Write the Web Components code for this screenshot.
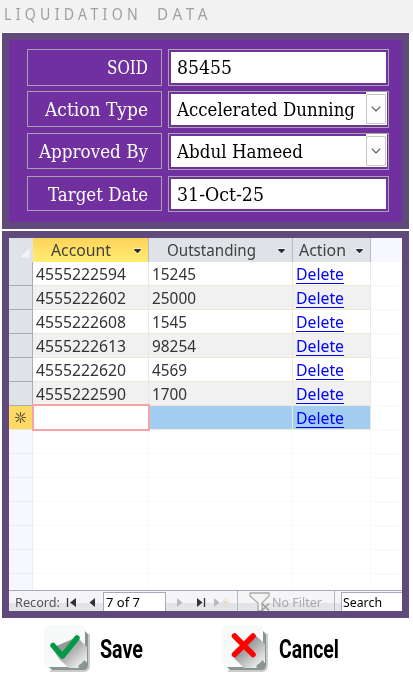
<!DOCTYPE html>
<html lang="en"><head><meta charset="utf-8"><title>Liquidation Data</title>
<style>html,body{margin:0;background:#fff}body{width:413px;height:681px;overflow:hidden}</style></head>
<body><liquidation-form></liquidation-form>
<script>
const define=(name,html,ready)=>customElements.define(name,class extends HTMLElement{
  connectedCallback(){
    if(this.shadowRoot)return;
    const t=document.createElement('template');
    t.innerHTML=typeof html==='function'?html(this):html;
    this.attachShadow({mode:'open'}).append(t.content.cloneNode(true));
    if(ready)ready(this);
  }
});

/* Single line of text whose glyph run is condensed or widened to the "w" attribute. */
define('fit-text',`<style>:host{display:block;flex:none;white-space:nowrap}span{display:inline-block;transform-origin:0 50%}</style><span><slot></slot></span>`,el=>{
  const s=el.shadowRoot.querySelector('span'),w=+el.getAttribute('w');
  const n=s.getBoundingClientRect().width;
  el.style.width=w+'px';
  if(n)s.style.transform=`scaleX(${w/n})`;
});

define('form-label',`<style>:host{display:flex;box-sizing:border-box;width:135px;border:1px solid #a8a0b0;justify-content:flex-end;align-items:center;padding-right:13px;color:#fff;font:17.7px/24px "DejaVu Serif",serif}</style><slot></slot>`);

define('form-field',el=>`<style>:host{display:flex;box-sizing:border-box;width:221px;border:1px solid #a6a6a6;padding:2px;color:#000;font:17.7px/24px "DejaVu Serif",serif}
.in{flex:1;display:flex;align-items:center;background:#fff;padding-left:6px}
.drop{box-sizing:border-box;width:21px;margin:-2px -1px 0 0;background:#fff;padding:2px 1px 1px 0;display:flex}
.drop div{flex:1;border:1px solid #c6c6c6;border-radius:1px;display:flex;align-items:center;justify-content:center;background:#fdfdfd}</style>
<div class="in"><slot></slot></div>${el.hasAttribute('combo')?'<div class="drop"><div><svg width="10" height="6" viewBox="0 0 10 6"><path d="M.7.7 5 5 9.3.7" fill="none" stroke="#555" stroke-width="1.1"/></svg></div></div>':''}`);

define('detail-form',`<style>:host{display:grid;box-sizing:border-box;width:407px;height:196px;margin:1px 0 0 2px;border:7px solid #604a7b;background:#7030a0;padding:9px 0 0 18px;grid-template-columns:135px 221px;column-gap:6px;grid-template-rows:37px 37px 37px 37px;row-gap:5px;align-content:start}
.s{height:36px;padding-top:2px}.last{margin-top:1px}form-label.last{height:35px;padding-top:2px}form-field.last{height:36px}form-field.last fit-text{margin-top:2px}</style>
<form-label><fit-text w="41">SOID</fit-text></form-label><form-field><fit-text w="55">85455</fit-text></form-field>
<form-label class="s"><fit-text w="103">Action Type</fit-text></form-label><form-field combo><fit-text w="178">Accelerated Dunning</fit-text></form-field>
<form-label class="s"><fit-text w="109">Approved By</fit-text></form-label><form-field combo><fit-text w="126">Abdul Hameed</fit-text></form-field>
<form-label class="last"><fit-text w="100">Target Date</fit-text></form-label><form-field class="last"><fit-text w="87">31-Oct-25</fit-text></form-field>`);

define('column-head',el=>`<style>:host{box-sizing:border-box;display:flex;align-items:center;justify-content:flex-end;height:24px;padding-right:6px;background:#dfe2e6;border-right:1px solid #b8bac0;color:#404040}
:host([active]){background:linear-gradient(#ffd35c,#ffed70)}fit-text{margin-right:${el.getAttribute('gap')}px;margin-top:-1px}svg{margin-top:2px}</style>
<fit-text w="${el.getAttribute('w')}"><slot></slot></fit-text><svg width="9" height="6" viewBox="0 0 9 6"><path d="M0 .5H9L4.5 6Z" fill="#fff"/><path d="M1.2 1H7.8V2L4.8 5H4.2L1.2 2Z" fill="#26303c"/></svg>`);

define('data-row',el=>{
  const a=el.getAttribute('account'),o=el.getAttribute('outstanding'),isNew=el.hasAttribute('new'),blank=el.hasAttribute('blank');
  return `<style>:host{display:grid;grid-template-columns:24px 116px 144px 78px 31px;height:24px;color:#333}
div{box-sizing:border-box;border-right:1px solid #ece9d8;border-bottom:1px solid #ece9d8;display:flex;align-items:center;padding-left:3px;background:${isNew?'#a3cef1':blank?'#fff':el.hasAttribute('alt')?'#f1f1f1':'#fff'}}
.sel{background:${isNew?'#ffd963':blank?'#f7f7ff':'#dfe2e6'};border-color:${isNew?'#ece9d8':'#a9adb6'};padding:0;justify-content:center}
.end{background:#fff;border-color:#f8f8f4;border-right:0}
.edit{background:#fff;position:relative}.edit::after{content:"";position:absolute;inset:-2px -2px -2px -1px;border:2px solid #f5a3a7;z-index:1}
${blank?'div{border-color:#f9f9f5}.sel{border-color:#ececf0}':''}
fit-text.link{color:#00f;border-bottom:1px solid #00f;line-height:18px;margin-top:1px}</style>
<div class="sel">${isNew?'<svg width="11" height="11" viewBox="0 0 11 11"><path d="M5.5 0V11M0 5.5H11M1.2 1.2 9.8 9.8M9.8 1.2 1.2 9.8" stroke="#5b5440" stroke-width="1.1"/><circle cx="5.5" cy="5.5" r="1.3" fill="#ffd963"/></svg>':''}</div>
<div class="${isNew?'edit':''}">${a?`<fit-text w="90">${a}</fit-text>`:''}</div>
<div>${o?`<fit-text w="${o.length*9-1}">${o}</fit-text>`:''}</div>
<div>${blank?'':'<fit-text class="link" w="48">Delete</fit-text>'}</div><div class="end"></div>`;
});

define('record-nav',`<style>:host{box-sizing:border-box;display:flex;height:21px;border-top:1px solid #a9a9bb;background:linear-gradient(#f5f5f7 0 58%,#e3e4e8 58% 100%);font:13px/20px "Noto Sans",sans-serif;color:#555;align-items:stretch;padding-left:6px}
.box{box-sizing:border-box;background:#fff;color:#000;border:1px solid #a9a9bb;border-bottom:0;padding-left:2px;line-height:18px;display:flex;margin-top:1px}
svg{display:block;flex:none}.sep{width:1px;background:#b5b5c3}.num{width:63px;margin-left:1px}.search{width:61px;border-right:0;margin-left:7px;padding-left:1px}fit-text{margin-top:1px}.box fit-text{margin-top:0}</style>
<fit-text w="45">Record:</fit-text>
<svg width="42" height="20"><path d="M7.5 7V16" stroke="#333" stroke-width="1.3"/><path d="M16 7V16L10 11.5ZM35 7V16L29.5 11.5Z" fill="#333"/></svg>
<div class="box num"><fit-text w="34">7 of 7</fit-text></div>
<svg width="71" height="20"><path d="M11 7V16L16.5 11.5Z" fill="#b9bbc1"/><path d="M31 7V16L36.5 11.5Z" fill="#333"/><path d="M38.5 7V16" stroke="#333" stroke-width="1.3"/><path d="M48 7V16L53.5 11.5Z" fill="#b9bbc1"/><path d="M55 11.5H64M59.5 7V16M56.5 8.5 62.5 14.5M62.5 8.5 56.5 14.5" stroke="#eadbc8"/></svg>
<div class="sep"></div>
<svg width="34" height="20"><path d="M12 2H31V5L24 12V20H20V12L12 5Z" fill="#f4f4f5" stroke="#aaa" stroke-width="1.3"/><path d="M24 12.5 31 19.5M31 12.5 24 19.5" stroke="#999" stroke-width="1.3"/></svg>
<fit-text w="50" style="color:#aaa">No Filter</fit-text>
<svg width="12" height="20"></svg><div class="sep"></div>
<div class="box search"><fit-text w="39">Search</fit-text></div>`);

const records=[['4555222594','15245'],['4555222602','25000'],['4555222608','1545'],['4555222613','98254'],['4555222620','4569'],['4555222590','1700']];
define('account-grid',()=>`<style>:host{box-sizing:border-box;display:flex;flex-direction:column;width:407px;height:387px;border:7px solid #604a7b;margin:2px 0 0 2px;font:16px/22px "Noto Sans",sans-serif;background:#fff}
.head{display:grid;grid-template-columns:24px 116px 144px 78px 31px;flex:none}.corner{background:#dfe2e6;display:flex;justify-content:flex-end;align-items:end;padding:0 3px 4px 0}.end{background:#f7f7ff}
.rows{flex:1;overflow:hidden;min-height:0}</style>
<div class="head"><div class="corner"><svg width="11" height="11"><path d="M11 0V11H0Z" fill="#f1f4f7" stroke="#ccd2d8" stroke-width=".5"/></svg></div>
<column-head active w="60" gap="22">Account</column-head><column-head w="89" gap="21">Outstanding</column-head><column-head w="47" gap="9">Action</column-head><div class="end"></div></div>
<div class="rows">${records.map((r,i)=>`<data-row account="${r[0]}" outstanding="${r[1]}" ${i%2?'alt':''}></data-row>`).join('')}<data-row new></data-row>${'<data-row blank></data-row>'.repeat(7)}</div><record-nav></record-nav>`);

define('action-button',el=>{
  const ok=el.getAttribute('kind')==='save';
  return `<style>:host{display:flex;align-items:flex-start;gap:${ok?10:11}px;font:bold 25px/30px Roboto,sans-serif;color:#000}svg{display:block;flex:none}fit-text{margin-top:10px}</style>
<svg width="46" height="50" viewBox="0 0 46 50"><defs><linearGradient id="g" x1="16" y1="18" x2="38" y2="42" gradientUnits="userSpaceOnUse"><stop offset=".25" stop-color="#999"/><stop offset="1" stop-color="#f4f5f5"/></linearGradient><filter id="b"><feGaussianBlur stdDeviation=".7"/></filter></defs>
<path d="M6 46H40Q45 46 45 40V9" fill="none" stroke="#ccc" stroke-width="2" filter="url(#b)"/>
<path d="M3 40 8 45H40Q44 45 44 40V9L39 4Z" fill="#899494"/>
<rect width="41" height="42" rx="5" fill="#f8fafa"/>
<path d="${ok?'M8 23 16 35 25 43H38L43 36V22L33 12Z':'M12 33 22 43H38L43 37V19L32 9Z'}" fill="url(#g)"/>
<path d="M41 35Q39 36 38 38 35 39 34 42L37 44H40Q43 44 43 40Z" fill="#899494"/>
${ok?'<path d="M9 20.5 18.5 31 33 13" fill="none" stroke="#009a47" stroke-width="5.5" stroke-linecap="round" stroke-linejoin="round"/>':'<path d="M12.5 11 31 29.5M31 11 12.5 29.5" stroke="#ff0000" stroke-width="5.5" stroke-linecap="round"/>'}
</svg><fit-text w="${ok?43:60}"><slot></slot></fit-text>`;
});

define('liquidation-form',`<style>:host{display:block;width:413px;height:681px;background:#fff}
header{box-sizing:border-box;display:flex;gap:15px;height:32px;background:#f2f2f2;padding:2px 0 0 4px;color:#a0a0a0;font:15.5px/24px "Noto Sans",sans-serif;letter-spacing:4.7px;white-space:pre}
footer{display:grid;grid-template-columns:178px 180px;padding:7px 0 0 44px}</style>
<header><fit-text w="138">LIQUIDATION</fit-text><fit-text w="55">DATA</fit-text></header>
<detail-form></detail-form><account-grid></account-grid>
<footer><action-button kind="save">Save</action-button><action-button kind="cancel">Cancel</action-button></footer>`);
</script></body></html>
